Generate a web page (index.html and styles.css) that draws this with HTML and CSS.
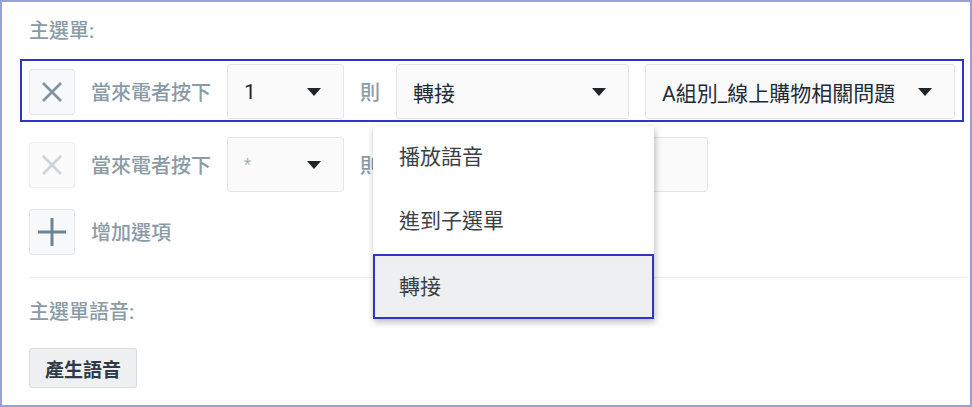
FILE: index.html
```html
<!DOCTYPE html>
<html lang="zh-Hant">
<head>
<meta charset="utf-8">
<title>主選單</title>
<link rel="stylesheet" href="styles.css">
</head>
<body>
<div class="frame">
  <div class="section-title">主選單:</div>

  <div class="rule-row selected">
    <button class="icon-btn"><svg viewBox="0 0 20 20" width="20" height="20"><path d="M1 1L19 19M19 1L1 19"/></svg></button>
    <span class="row-label">當來電者按下</span>
    <div class="select sel-key"><span class="val">1</span><span class="caret"></span></div>
    <span class="row-label">則</span>
    <div class="select sel-action"><span class="val">轉接</span><span class="caret"></span></div>
    <div class="select sel-target"><span class="val">A組別_線上購物相關問題</span><span class="caret"></span></div>
  </div>

  <div class="rule-row">
    <button class="icon-btn disabled"><svg viewBox="0 0 20 20" width="20" height="20"><path d="M1 1L19 19M19 1L1 19"/></svg></button>
    <span class="row-label">當來電者按下</span>
    <div class="select sel-key"><span class="val placeholder">*</span><span class="caret"></span></div>
    <span class="row-label">則</span>
    <div class="select sel-action wide"></div>
  </div>

  <div class="rule-row add-row">
    <button class="icon-btn plus"><svg viewBox="0 0 30 30" width="30" height="30"><path d="M15 1V29M1 15H29"/></svg></button>
    <span class="row-label">增加選項</span>
  </div>

  <div class="divider"></div>

  <div class="section-title second">主選單語音:</div>
  <button class="gen-btn">產生語音</button>

  <ul class="menu">
    <li class="menu-item">播放語音</li>
    <li class="menu-item">進到子選單</li>
    <li class="menu-item active">轉接</li>
  </ul>
</div>
</body>
</html>
```

FILE: styles.css
```css
* { box-sizing: border-box; }

html, body {
  margin: 0;
  padding: 0;
  background: #ffffff;
}

body {
  font-family: Roboto, "Noto Sans CJK TC", "Noto Sans", sans-serif;
  color: #222;
}

.frame {
  position: relative;
  width: 972px;
  height: 407px;
  border: 2px solid #97a0dc;
  padding: 17px 6px 0 18px;
  display: flex;
  flex-direction: column;
  align-items: flex-start;
  overflow: hidden;
}

.section-title {
  margin-left: 9px;
  font-size: 20px;
  font-weight: 500;
  line-height: 24px;
  color: #8b9ba6;
  margin-bottom: 16px;
}

.section-title.second {
  margin-top: 22px;
  margin-bottom: 24px;
}

.rule-row {
  display: flex;
  align-items: center;
  gap: 16px;
  width: 100%;
  height: 63px;
  padding: 3px 4px 1px 7px;
  border: 2px solid transparent;
}

.rule-row + .rule-row { margin-top: 10px; }
.rule-row.add-row { margin-top: 4px; }

.rule-row.selected {
  border-color: #2f34c8;
}

.icon-btn {
  width: 46px;
  height: 46px;
  flex: none;
  padding: 0;
  margin: 0;
  border: 1px solid #e2e6e9;
  border-radius: 3px;
  background: #f7f8f9;
  display: flex;
  align-items: center;
  justify-content: center;
}

.icon-btn svg path {
  fill: none;
  stroke: #8193a0;
  stroke-width: 2.6;
}

.icon-btn.disabled {
  border-color: #eef0f2;
  background: #fbfbfc;
}

.icon-btn.disabled svg path { stroke: #cdd4d9; }

.icon-btn.plus svg path {
  stroke: #6f8492;
  stroke-width: 3;
}

.row-label {
  font-size: 20px;
  font-weight: 500;
  color: #8b9ba6;
  white-space: nowrap;
}

.select {
  flex: none;
  height: 55px;
  border: 1px solid #e3e6e9;
  border-radius: 3px;
  background: #fafafa;
  display: flex;
  align-items: center;
  justify-content: space-between;
  padding: 0 22px 0 16px;
  font-size: 21px;
  color: #1f2b35;
}

.sel-key { width: 117px; }
.sel-action { width: 233px; }
.sel-action.wide { width: 312px; }
.sel-target { width: 310px; }

.val { white-space: nowrap; }

.placeholder {
  color: #a9b1b7;
  font-size: 16px;
}

.caret {
  width: 0;
  height: 0;
  border-left: 7px solid transparent;
  border-right: 7px solid transparent;
  border-top: 8px solid #1f2428;
}

.divider {
  align-self: stretch;
  height: 1px;
  background: #ededee;
  margin: 15px -6px 0 9px;
}

.gen-btn {
  margin-left: 9px;
  width: 108px;
  height: 40px;
  padding: 0;
  border: 1px solid #d6dbdf;
  border-radius: 3px;
  background: #eef0f2;
  font-family: Roboto, "Noto Sans CJK TC", sans-serif;
  font-size: 19px;
  font-weight: 700;
  color: #2e3b45;
}

.menu {
  position: absolute;
  left: 371px;
  top: 124px;
  width: 281px;
  margin: 0;
  padding: 0;
  list-style: none;
  background: #fff;
  box-shadow: 1px 3px 7px rgba(0, 0, 0, 0.28);
}

.menu-item {
  height: 64px;
  display: flex;
  align-items: center;
  padding-left: 26px;
  padding-bottom: 6px;
  font-size: 21px;
  color: #3a3f44;
}

.menu-item.active {
  background: #eeeff1;
  border: 2px solid #2f34c8;
  padding-left: 24px;
  padding-bottom: 4px;
  height: 65px;
}
```
